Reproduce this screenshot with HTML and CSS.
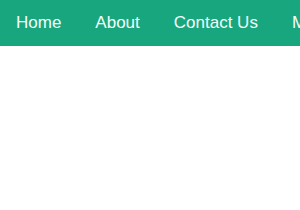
FILE: index.html
```html
<!DOCTYPE html>
<html lang="en">
<head>
    <meta charset="UTF-8">
    <meta name="viewport" content="width=device-width, initial-scale=1.0">
    <title>Navigation</title>
    <link rel="stylesheet" href="styles.css">
</head>
<body>

<nav class="topnav">
    <a href="#">Home</a>
    <a href="#">About</a>
    <a href="#">Contact Us</a>
    <a href="#">More</a>
</nav>

</body>
</html>
```

FILE: styles.css
```css
body {
    margin: 0;
    background: #ffffff;
    font-family: 'Liberation Sans', Arial, sans-serif;
    overflow: hidden;
}

.topnav {
    display: flex;
    background-color: #17a67e; /* Green bar */
    height: 46px;
    padding-left: 0;
    white-space: nowrap;
}

.topnav a {
    display: block;
    flex-shrink: 0;
    color: #f2fff9;
    text-decoration: none;
    font-size: 17px;
    line-height: 46px;
    padding: 0 17px;
}

.topnav a:first-child {
    padding-left: 16px;
}
```
